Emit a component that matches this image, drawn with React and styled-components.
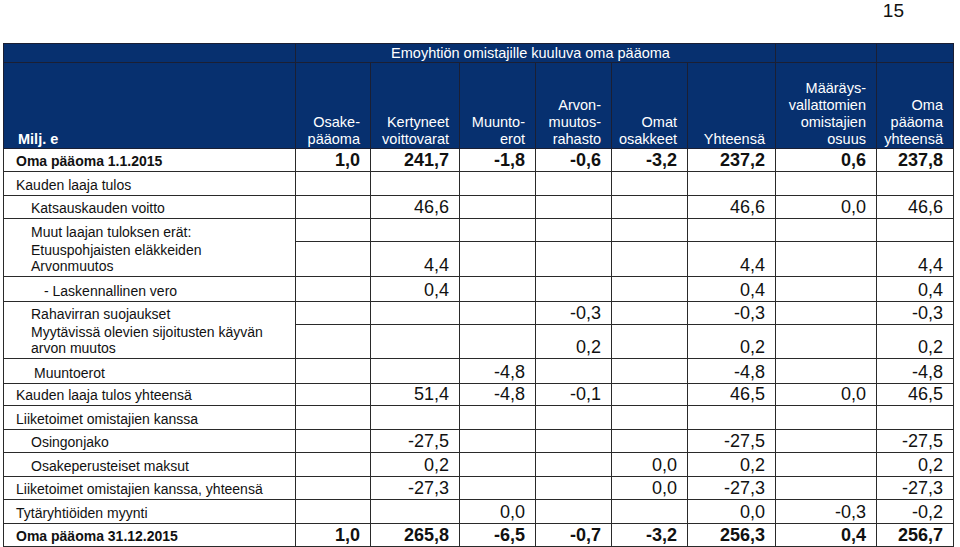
import React from "react";
import styled, { createGlobalStyle } from "styled-components";

const Global = createGlobalStyle`
  html, body { margin: 0; padding: 0; background: #fff; }
  body { font-family: "Liberation Sans", Arial, sans-serif; color: #111; }
`;

const Page = styled.div`
  width: 960px;
  height: 547px;
  overflow: hidden;
  display: flex;
  flex-direction: column;
`;

const PageNumber = styled.div`
  height: 44px;
  display: flex;
  justify-content: flex-end;
  padding-right: 56px;
  box-sizing: border-box;
  font-size: 19px;
  line-height: 22px;
  padding-top: 0px;
  color: #111;
`;

const Table = styled.table`
  margin-left: 3px;
  width: 950px;
  border-collapse: collapse;
  table-layout: fixed;
  font-family: "Liberation Sans", Arial, sans-serif;
`;

const HeadRow = styled.tr`
  height: ${(p) => p.$h}px;
  background: #07306f;
`;

const HeadCell = styled.th`
  border: 1px solid #1b1f33;
  color: #fff;
  font-weight: ${(p) => (p.$bold ? 700 : 400)};
  font-size: 14.5px;
  line-height: 17px;
  text-align: ${(p) => p.$align || "right"};
  vertical-align: ${(p) => (p.$align === "center" ? "middle" : "bottom")};
  padding: 0 ${(p) => (p.$align === "left" ? 0 : 10)}px 0 ${(p) => (p.$align === "left" ? 14 : 0)}px;
  white-space: pre-line;
`;

const BodyRow = styled.tr`
  height: ${(p) => p.$h}px;
`;

const LabelCell = styled.td`
  border-left: 1px solid #2a2a2a;
  border-right: 1px solid #2a2a2a;
  border-top: ${(p) => (p.$noTop ? "none" : "1px solid #2a2a2a")};
  border-bottom: ${(p) => (p.$noBottom ? "none" : "1px solid #2a2a2a")};
  font-size: 14px;
  line-height: 16px;
  font-weight: ${(p) => (p.$bold ? 700 : 400)};
  padding: 0 0 2px ${(p) => 12 + p.$indent}px;
  vertical-align: bottom;
  white-space: pre-line;
`;

const NumCell = styled.td`
  border: 1px solid #2a2a2a;
  font-size: 18px;
  line-height: 20px;
  font-weight: ${(p) => (p.$bold ? 700 : 400)};
  text-align: right;
  padding: 0 10px 1px 0;
  vertical-align: bottom;
`;

const cols = [292, 75, 89, 76, 76, 76, 88, 101, 77];

const rows = [
  { label: "Oma pääoma 1.1.2015", bold: true, h: 23, indent: 0, v: ["1,0", "241,7", "-1,8", "-0,6", "-3,2", "237,2", "0,6", "237,8"] },
  { label: "Kauden laaja tulos", h: 24, indent: 0, v: [] },
  { label: "Katsauskauden voitto", h: 23, indent: 15, v: { 1: "46,6", 5: "46,6", 6: "0,0", 7: "46,6" } },
  { label: "Muut laajan tuloksen erät:", h: 23, indent: 15, noBottom: true, v: {} },
  { label: "Etuuspohjaisten eläkkeiden\nArvonmuutos", h: 33, indent: 15, noTop: true, v: { 1: "4,4", 5: "4,4", 7: "4,4" } },
  { label: "- Laskennallinen vero", h: 25, indent: 28, v: { 1: "0,4", 5: "0,4", 7: "0,4" } },
  { label: "Rahavirran suojaukset", h: 23, indent: 15, noBottom: true, v: { 3: "-0,3", 5: "-0,3", 7: "-0,3" } },
  { label: "Myytävissä olevien sijoitusten käyvän\narvon muutos", h: 34, indent: 15, noTop: true, v: { 3: "0,2", 5: "0,2", 7: "0,2" } },
  { label: "Muuntoerot", h: 25, indent: 18, v: { 2: "-4,8", 5: "-4,8", 7: "-4,8" } },
  { label: "Kauden laaja tulos yhteensä", h: 22, indent: 0, v: { 1: "51,4", 2: "-4,8", 3: "-0,1", 5: "46,5", 6: "0,0", 7: "46,5" } },
  { label: "Liiketoimet omistajien kanssa", h: 24, indent: 0, v: {} },
  { label: "Osingonjako", h: 23, indent: 15, v: { 1: "-27,5", 5: "-27,5", 7: "-27,5" } },
  { label: "Osakeperusteiset maksut", h: 24, indent: 15, v: { 1: "0,2", 4: "0,0", 5: "0,2", 7: "0,2" } },
  { label: "Liiketoimet omistajien kanssa, yhteensä", h: 23, indent: 0, v: { 1: "-27,3", 4: "0,0", 5: "-27,3", 7: "-27,3" } },
  { label: "Tytäryhtiöiden myynti", h: 24, indent: 0, v: { 2: "0,0", 5: "0,0", 6: "-0,3", 7: "-0,2" } },
  { label: "Oma pääoma 31.12.2015", bold: true, h: 23, indent: 0, v: ["1,0", "265,8", "-6,5", "-0,7", "-3,2", "256,3", "0,4", "256,7"] },
];

const headers = [
  "Osake-\npääoma",
  "Kertyneet\nvoittovarat",
  "Muunto-\nerot",
  "Arvon-\nmuutos-\nrahasto",
  "Omat\nosakkeet",
  "Yhteensä",
  "Määräys-\nvallattomien\nomistajien\nosuus",
  "Oma\npääoma\nyhteensä",
];

export default function App() {
  return (
    <Page>
      <Global />
      <PageNumber>15</PageNumber>
      <Table>
        <colgroup>
          {cols.map((w, i) => (
            <col key={i} style={{ width: w }} />
          ))}
        </colgroup>
        <thead>
          <HeadRow $h={19}>
            <HeadCell />
            <HeadCell colSpan={6} $align="center">
              Emoyhtiön omistajille kuuluva oma pääoma
            </HeadCell>
            <HeadCell />
            <HeadCell />
          </HeadRow>
          <HeadRow $h={86}>
            <HeadCell $align="left" $bold>
              Milj. e
            </HeadCell>
            {headers.map((h, i) => (
              <HeadCell key={i}>{h}</HeadCell>
            ))}
          </HeadRow>
        </thead>
        <tbody>
          {rows.map((r, i) => (
            <BodyRow key={i} $h={r.h}>
              <LabelCell $bold={r.bold} $indent={r.indent} $noTop={r.noTop} $noBottom={r.noBottom}>
                {r.label}
              </LabelCell>
              {Array.from({ length: 8 }).map((_, c) => (
                <NumCell key={c} $bold={r.bold}>
                  {r.v[c] || ""}
                </NumCell>
              ))}
            </BodyRow>
          ))}
        </tbody>
      </Table>
    </Page>
  );
}
